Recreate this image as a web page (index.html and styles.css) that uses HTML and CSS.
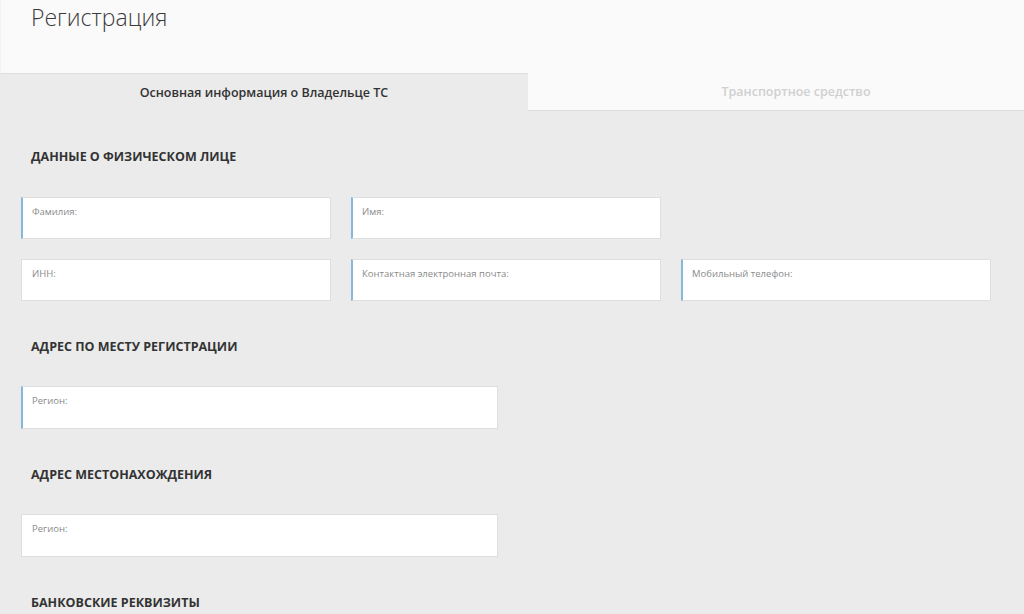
FILE: index.html
```html
<!DOCTYPE html>
<html lang="ru">
<head>
    <meta charset="UTF-8">
    <meta name="viewport" content="width=device-width, initial-scale=1.0">
    <title>Регистрация</title>
    <link rel="stylesheet" href="styles.css">
</head>
<body>
    <header class="page-header">
        <h1>Регистрация</h1>
    </header>

    <nav class="tabs">
        <div class="tab active">Основная информация о Владельце ТС</div>
        <div class="tab">Транспортное средство</div>
    </nav>

    <main class="form-body">
        <section class="section">
            <h2>Данные о физическом лице</h2>
            <div class="grid">
                <div class="field marked"><span>Фамилия:</span></div>
                <div class="field marked"><span>Имя:</span></div>
                <div class="empty"></div>
                <div class="field"><span>ИНН:</span></div>
                <div class="field marked"><span>Контактная электронная почта:</span></div>
                <div class="field marked"><span>Мобильный телефон:</span></div>
            </div>
        </section>

        <section class="section">
            <h2>Адрес по месту регистрации</h2>
            <div class="field wide marked"><span>Регион:</span></div>
        </section>

        <section class="section">
            <h2>Адрес местонахождения</h2>
            <div class="field wide"><span>Регион:</span></div>
        </section>

        <section class="section">
            <h2>Банковские реквизиты</h2>
        </section>
    </main>
</body>
</html>
```

FILE: styles.css
```css
body {
    margin: 0;
    font-family: 'Open Sans', 'Liberation Sans', sans-serif;
    background-color: #ebebeb;
    color: #333;
}
.page-header {
    background-color: #fafafa;
    height: 73px;
    padding: 0 30px;
    border-left: 1px solid #f3f3f3;
}
.page-header h1 {
    margin: 0;
    padding-top: 1px;
    font-size: 23px;
    font-weight: 300;
    line-height: 32px;
    color: #3a3a3a;
}
.tabs {
    display: flex;
}
.tab {
    flex: 1;
    height: 37px;
    line-height: 37px;
    padding-left: 40px;
    text-align: center;
    font-size: 12.5px;
    font-weight: 600;
    background-color: #fafafa;
    color: #d0d0d0;
    border-bottom: 1px solid #dcdcdc;
}
.tab.active {
    flex: 0 0 528px;
    padding-left: 0;
    background-color: #ebebeb;
    color: #333;
    border-top: 1px solid #dedede;
    border-bottom: none;
}
.form-body {
    padding: 0 21px;
}
.section h2 {
    margin: 0;
    padding: 38px 0 31px 10px;
    font-size: 12.5px;
    font-weight: 700;
    line-height: 16px;
    text-transform: uppercase;
    color: #333;
}
.section:first-child h2 {
    padding-bottom: 32px;
}
.grid {
    display: grid;
    grid-template-columns: repeat(3, 310px);
    column-gap: 20px;
    row-gap: 20px;
}
.field {
    box-sizing: border-box;
    height: 42px;
    background-color: #fff;
    border: 1px solid #dedede;
    padding: 7px 10px;
    font-size: 9.5px;
    color: #8a8a8a;
}
.field.marked {
    border-left: 2px solid #86b8de;
    padding-left: 9px;
}
.field.wide {
    width: 477px;
    height: 43px;
}
```
